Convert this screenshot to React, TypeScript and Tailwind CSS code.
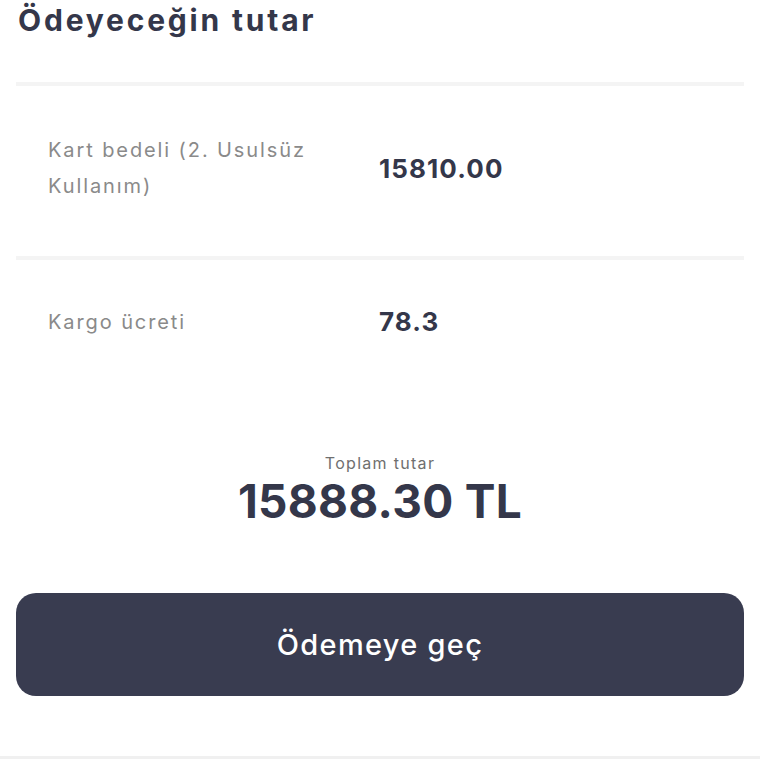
const rows = [
  { label: "Kart bedeli (2. Usulsüz Kullanım)", value: "15810.00", pad: "pt-[46px] pb-[52px]" },
  { label: "Kargo ücreti", value: "78.3", pad: "pt-[42px] pb-[52px]" },
];

export default function App() {
  return (
    <div className="w-[768px] h-[768px] bg-white overflow-hidden font-['Inter',_sans-serif]">
      <div className="pl-[16px] pr-[24px]">
        <h1 className="pl-[2px] text-[30px] leading-[40px] font-bold tracking-[2.8px] text-[#34374a]">
          Ödeyeceğin tutar
        </h1>
        <div className="mt-[42px]">
          {rows.map((r, i) => (
            <div key={i}>
              <div className="h-[4px] bg-[#f4f4f4]" />
              <div className={`flex items-center pl-[32px] ${r.pad}`}>
                <div className="w-[300px] text-[20px] leading-[36px] tracking-[1.9px] text-[#8a8a8a]">
                  {r.label}
                </div>
                <div className="ml-[31px] text-[26px] font-bold tracking-[1.1px] text-[#34374a]">
                  {r.value}
                </div>
              </div>
            </div>
          ))}
        </div>
        <div className="flex flex-col items-center mt-[60px]">
          <div className="text-[16px] leading-[20px] tracking-[1.3px] text-[#6f6f6f]">Toplam tutar</div>
          <div className="text-[46px] leading-[56px] font-bold tracking-[0.3px] text-[#34374a]">15888.30 TL</div>
        </div>
        <button className="mt-[64px] w-full h-[103px] rounded-[20px] bg-[#393c50] text-white text-[29px] font-medium tracking-[1.3px]">
          Ödemeye geç
        </button>
      </div>
      <div className="mt-[60px] mr-[8px] h-[3px] bg-[#f0f0f0]" />
    </div>
  );
}
